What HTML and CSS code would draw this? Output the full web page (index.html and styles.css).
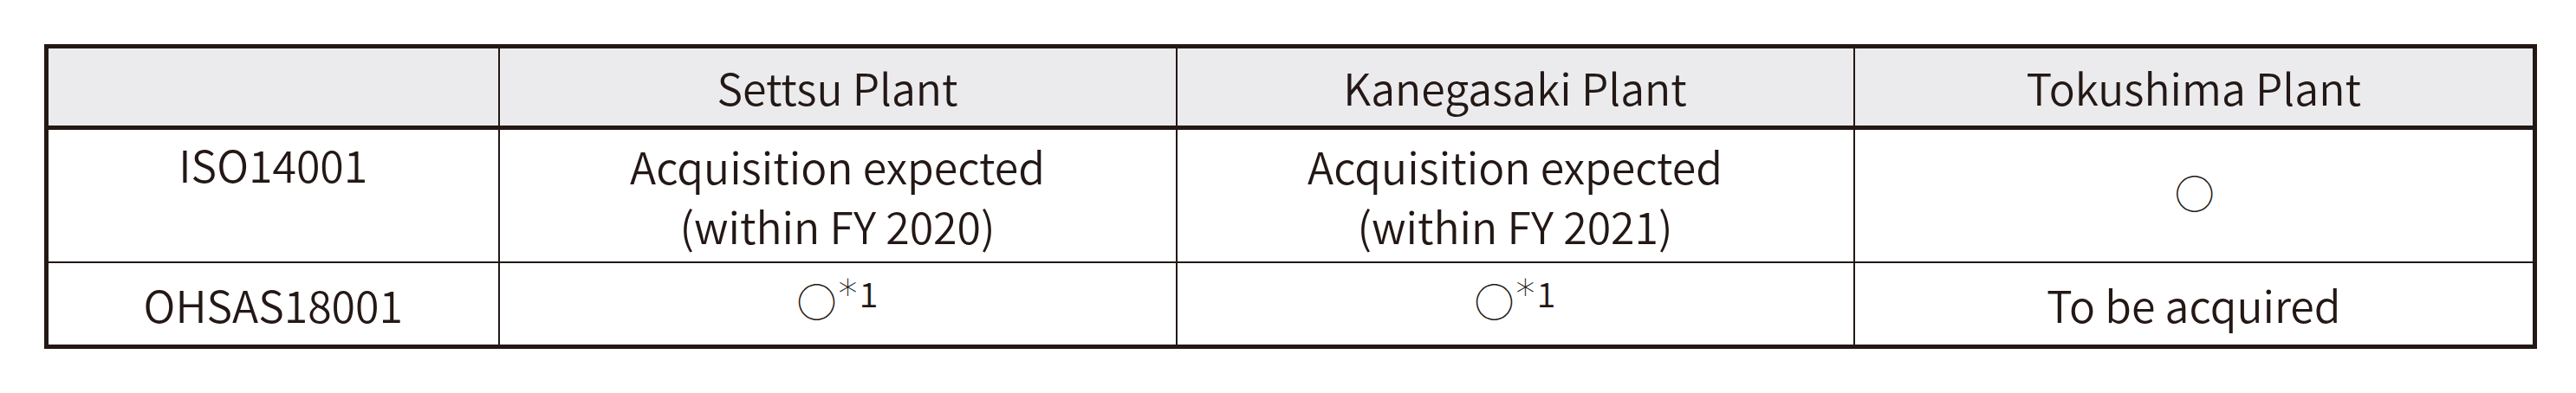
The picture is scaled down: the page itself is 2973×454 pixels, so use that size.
FILE: index.html
```html
<!DOCTYPE html>
<html lang="en">
<head>
<meta charset="utf-8">
<title>Certification status</title>
<link rel="stylesheet" href="styles.css">
</head>
<body>
<table class="cert">
  <colgroup>
    <col class="c-label">
    <col class="c-plant">
    <col class="c-plant">
    <col class="c-plant-last">
  </colgroup>
  <thead>
    <tr class="head-row">
      <th></th>
      <th>Settsu Plant</th>
      <th>Kanegasaki Plant</th>
      <th>Tokushima Plant</th>
    </tr>
  </thead>
  <tbody>
    <tr class="row-iso">
      <td class="label">ISO14001</td>
      <td>Acquisition expected<br>(within FY 2020)</td>
      <td>Acquisition expected<br>(within FY 2021)</td>
      <td><span class="mark">○</span></td>
    </tr>
    <tr class="row-ohsas">
      <td class="label">OHSAS18001</td>
      <td><span class="mark">○</span><span class="note"><span class="ast">*</span>1</span></td>
      <td><span class="mark">○</span><span class="note"><span class="ast">*</span>1</span></td>
      <td>To be acquired</td>
    </tr>
  </tbody>
</table>
</body>
</html>
```

FILE: styles.css
```css
html, body {
  margin: 0;
  padding: 0;
  background: #ffffff;
}

body {
  padding: 51px 0 0 51px;
  font-family: "Noto Sans CJK JP", "Noto Sans", sans-serif;
  color: #231815;
}

.cert {
  border-collapse: collapse;
  table-layout: fixed;
  width: 2872px;
  border: 5px solid #231815;
  font-size: 50px;
  line-height: 69px;
}

.c-label { width: 522px; }
.c-plant { width: 782px; }
.c-plant-last { width: 786px; }

.cert th,
.cert td {
  border: 2px solid #231815;
  text-align: center;
  vertical-align: middle;
  padding: 0;
  font-weight: 350;
}

.head-row th {
  background: #ebebed;
  height: 89px;
  border-bottom: 5px solid #231815;
  border-top: 5px solid #231815;
}

.row-iso td {
  height: 147px;
}

.row-iso td.label {
  vertical-align: top;
  padding-top: 5px;
}

.row-ohsas td {
  height: 94px;
}

.mark {
  display: inline-block;
  width: 44px;
  height: 41px;
  font-size: 46px;
  line-height: 41px;
  vertical-align: middle;
  margin-bottom: 20px;
  font-weight: 300;
}

.note {
  display: inline-block;
  font-size: 40px;
  line-height: 40px;
  vertical-align: top;
  margin-top: 3px;
  margin-left: 4px;
}

.ast {
  font-family: "DejaVu Sans", sans-serif;
  font-size: 44px;
  margin-right: 2px;
}
```
